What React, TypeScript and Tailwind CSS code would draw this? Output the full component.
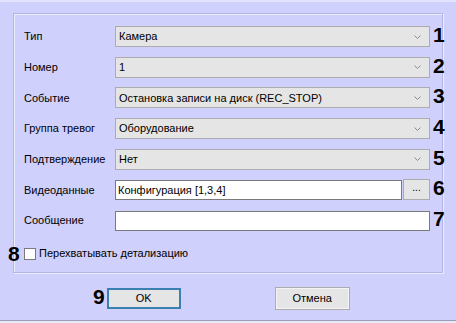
import React from "react";

const font = { fontFamily: '"Liberation Sans", Arial, sans-serif' };

function Chevron() {
  return (
    <svg width="7" height="4" viewBox="0 0 7 4" className="shrink-0">
      <path d="M0.5 0.5 L3.5 3.5 L6.5 0.5" fill="none" stroke="#8a8a8a" strokeWidth="1" />
    </svg>
  );
}

function Num({ n }: { n: string }) {
  return (
    <span className="w-[13px] shrink-0 text-[21px] font-bold leading-none text-black">{n}</span>
  );
}

function ComboRow({ label, value, n }: { label: string; value: string; n: string }) {
  return (
    <div className="flex h-[21px] items-center">
      <span className="w-[91px] shrink-0 text-[11px] text-black">{label}</span>
      <div className="flex h-[21px] w-[315px] shrink-0 items-center justify-between border border-[#acacac] bg-[#e5e5e5] pl-[3px] pr-[8px] text-[11px] text-black">
        <span>{value}</span>
        <Chevron />
      </div>
      <span className="ml-[3px]">
        <Num n={n} />
      </span>
    </div>
  );
}

function InputRow({ label, value, n, dots }: { label: string; value: string; n: string; dots?: boolean }) {
  return (
    <div className="flex h-[21px] items-center">
      <span className="w-[91px] shrink-0 text-[11px] text-black">{label}</span>
      <div className={`flex h-[20px] shrink-0 items-center border border-[#7a7a7a] bg-white pl-[2px] text-[11px] text-black ${dots ? "w-[287px]" : "w-[315px]"}`}>
        {value}
      </div>
      {dots && (
        <div className="ml-[1px] flex h-[21px] w-[27px] shrink-0 items-center justify-center border border-[#acacac] bg-[#e5e5e5] pb-[4px] text-[10px] text-black">
          ...
        </div>
      )}
      <span className="ml-[3px]">
        <Num n={n} />
      </span>
    </div>
  );
}

export default function App() {
  return (
    <div className="relative h-[323px] w-[456px] overflow-hidden bg-[#d0d0fc]" style={font}>
      <div className="h-[2px] w-full bg-[#e2e2ff]" />
      <div className="ml-[13px] mt-[11px] h-[260px] w-[430px] border border-[#b4b4e6] shadow-[inset_1px_1px_0_#ececff,1px_1px_0_#ececff]">
        <div className="flex flex-col gap-[9.7px] pl-[10px] pt-[12px]">
          <ComboRow label="Тип" value="Камера" n="1" />
          <ComboRow label="Номер" value="1" n="2" />
          <ComboRow label="Событие" value="Остановка записи на диск (REC_STOP)" n="3" />
          <ComboRow label="Группа тревог" value="Оборудование" n="4" />
          <ComboRow label="Подтверждение" value="Нет" n="5" />
          <InputRow label="Видеоданные" value="Конфигурация [1,3,4]" n="6" dots />
          <InputRow label="Сообщение" value="" n="7" />
        </div>
        <div className="-ml-[6px] mt-[12px] flex items-center">
          <Num n="8" />
          <div className="ml-[3px] h-[12px] w-[12px] border border-[#7a7a7a] bg-white" />
          <span className="ml-[3px] text-[11px] text-black">Перехватывать детализацию</span>
        </div>
      </div>
      <div className="mt-[13px] flex items-center">
        <span className="ml-[93px]">
          <Num n="9" />
        </span>
        <div className="ml-[2px] flex h-[21px] w-[74px] items-center justify-center border-2 border-[#3c7fb1] bg-[#e5e5e5] text-[11px] text-black">
          OK
        </div>
        <div className="ml-[94px] flex h-[23px] w-[75px] items-center justify-center border border-[#acacac] bg-[#e5e5e5] text-[11px] text-black shadow-[inset_0_0_0_1px_#f4f4f4]">
          Отмена
        </div>
      </div>
      <div className="absolute bottom-0 left-0 h-[3px] w-full border-t border-[#9c9cb8] bg-[#e8e8f8]" />
    </div>
  );
}
